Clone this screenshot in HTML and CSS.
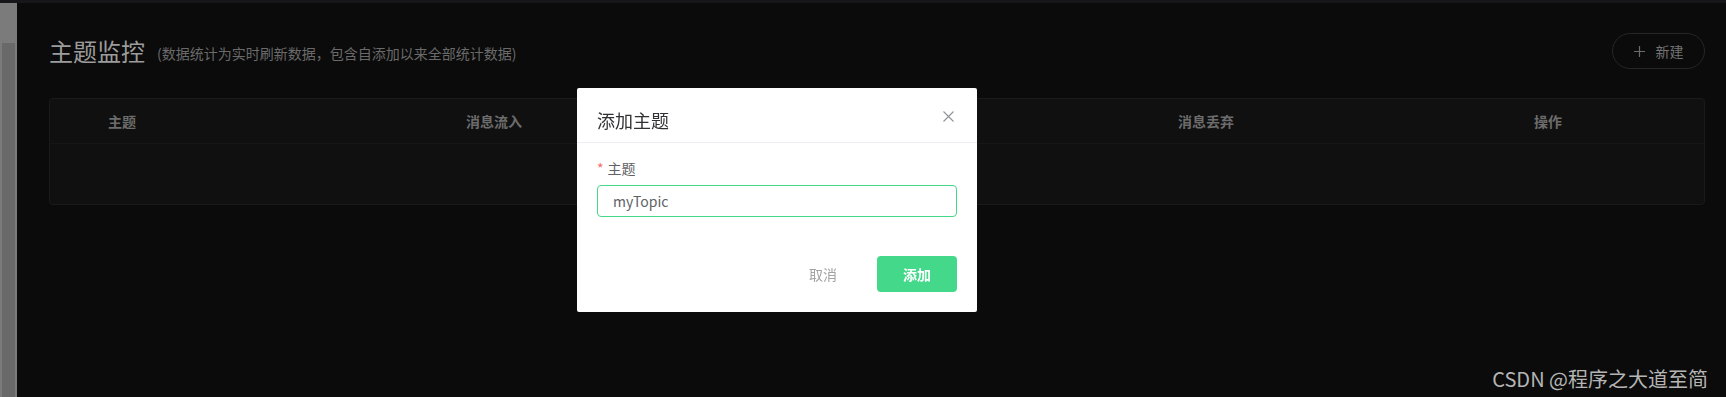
FILE: index.html
```html
<!DOCTYPE html>
<html lang="zh-CN">
<head>
  <meta charset="UTF-8">
  <meta name="viewport" content="width=device-width, initial-scale=1.0">
  <title>主题监控</title>
  <link rel="stylesheet" href="styles.css">
</head>
<body>
  <div class="topbar"></div>
  <div class="layout">
    <div class="sidebar"><div class="thumb"></div></div>

    <main class="main">
      <div class="page-head">
        <h1 class="title">主题监控</h1>
        <span class="subtitle">(数据统计为实时刷新数据，包含自添加以来全部统计数据)</span>
        <button class="btn-new">
          <svg width="11" height="11" viewBox="0 0 11 11"><path d="M5.5 0v11M0 5.5h11" stroke="#6b6b6b" stroke-width="1.2" fill="none"/></svg>
          <span>新建</span>
        </button>
      </div>

      <!-- topic table -->
      <div class="table">
        <div class="thead">
          <div class="cell">主题</div>
          <div class="cell">消息流入</div>
          <div class="cell">消息流出</div>
          <div class="cell">消息丢弃</div>
          <div class="cell">操作</div>
        </div>
        <div class="tbody"></div>
      </div>
    </main>
  </div>

  <!-- add topic dialog -->
  <div class="dialog">
    <div class="dialog-head">
      <span class="dialog-title">添加主题</span>
      <svg class="dialog-close" width="11" height="11" viewBox="0 0 11 11"><path d="M0.5 0.5l10 10M10.5 0.5l-10 10" stroke="#909399" stroke-width="1.1" fill="none"/></svg>
    </div>
    <div class="dialog-body">
      <label class="form-label" for="topic"><span class="required">*</span>主题</label>
      <input class="form-input" id="topic" type="text" value="myTopic">
    </div>
    <div class="dialog-foot">
      <button class="btn-cancel">取消</button>
      <button class="btn-primary">添加</button>
    </div>
  </div>

  <div class="watermark">CSDN @程序之大道至简</div>
</body>
</html>
```

FILE: styles.css
```css
body {
  margin: 0;
  width: 1726px;
  height: 397px;
  overflow: hidden;
  background: #0b0b0b;
  font-family: "Noto Sans CJK SC", "Noto Sans", sans-serif;
}

.topbar {
  height: 3px;
  background: #17171a;
}

.layout {
  display: flex;
  height: 394px;
}

.sidebar {
  width: 17px;
  background: #7b7b7b;
  display: flex;
  flex-direction: column;
}

.sidebar .thumb {
  flex: 1;
  margin: 40px 2px 0 2px;
  background: #696969;
}

.main {
  flex: 1;
  padding: 0 21px 0 32px;
}

.page-head {
  display: flex;
  align-items: center;
  margin-top: 30px;
  height: 36px;
}

.title {
  margin: 0;
  font-size: 24px;
  font-weight: normal;
  color: #9c9c9c;
  line-height: 32px;
}

.subtitle {
  margin-left: 12px;
  margin-top: 3px;
  font-size: 14px;
  color: #6a6a6a;
}

.btn-new {
  margin-left: auto;
  width: 93px;
  height: 36px;
  border: 1px solid #262626;
  border-radius: 18px;
  background: transparent;
  color: #737373;
  font-family: inherit;
  font-size: 14px;
  display: flex;
  align-items: center;
  justify-content: center;
  gap: 11px;
  padding: 0;
}

.table {
  margin-top: 29px;
  background: #101010;
  border: 1px solid #1a1a1a;
  border-radius: 4px;
}

.thead {
  display: grid;
  grid-template-columns: 358px 356px 356px 356px 1fr;
  height: 44px;
  align-items: center;
  border-bottom: 1px solid #161616;
}

.thead .cell {
  padding-left: 58px;
  font-size: 14px;
  font-weight: bold;
  color: #6c6c6c;
}

.tbody {
  height: 60px;
}

/* dialog */
.dialog {
  position: fixed;
  left: 577px;
  top: 88px;
  width: 400px;
  height: 224px;
  background: #fff;
  border-radius: 2px;
  display: flex;
  flex-direction: column;
}

.dialog-head {
  position: relative;
  padding: 20px 20px 9px;
  border-bottom: 1px solid #ebeef5;
}

.dialog-title {
  font-size: 18px;
  line-height: 24px;
  color: #303133;
}

.dialog-close {
  position: absolute;
  right: 23px;
  top: 23px;
}

.dialog-body {
  padding: 15px 20px 0;
  display: flex;
  flex-direction: column;
}

.form-label {
  font-size: 14px;
  line-height: 20px;
  color: #606266;
}

.required {
  color: #f56c6c;
  margin-right: 4px;
}

.form-input {
  margin-top: 7px;
  height: 32px;
  box-sizing: border-box;
  border: 1px solid #44d889;
  border-radius: 4px;
  padding: 0 15px;
  font-family: inherit;
  font-size: 14px;
  color: #606266;
  outline: none;
}

.dialog-foot {
  margin-top: auto;
  padding: 0 20px 20px;
  display: flex;
  justify-content: flex-end;
  gap: 14px;
}

.btn-cancel,
.btn-primary {
  width: 80px;
  height: 36px;
  border: none;
  border-radius: 4px;
  font-family: inherit;
  font-size: 14px;
  padding: 0;
}

.btn-cancel {
  background: transparent;
  color: #a3a3a3;
}

.btn-primary {
  background: #44d98a;
  color: #fff;
  font-weight: bold;
}

.watermark {
  position: absolute;
  right: 18px;
  top: 364px;
  font-size: 20px;
  color: #b5b5b5;
}
```
